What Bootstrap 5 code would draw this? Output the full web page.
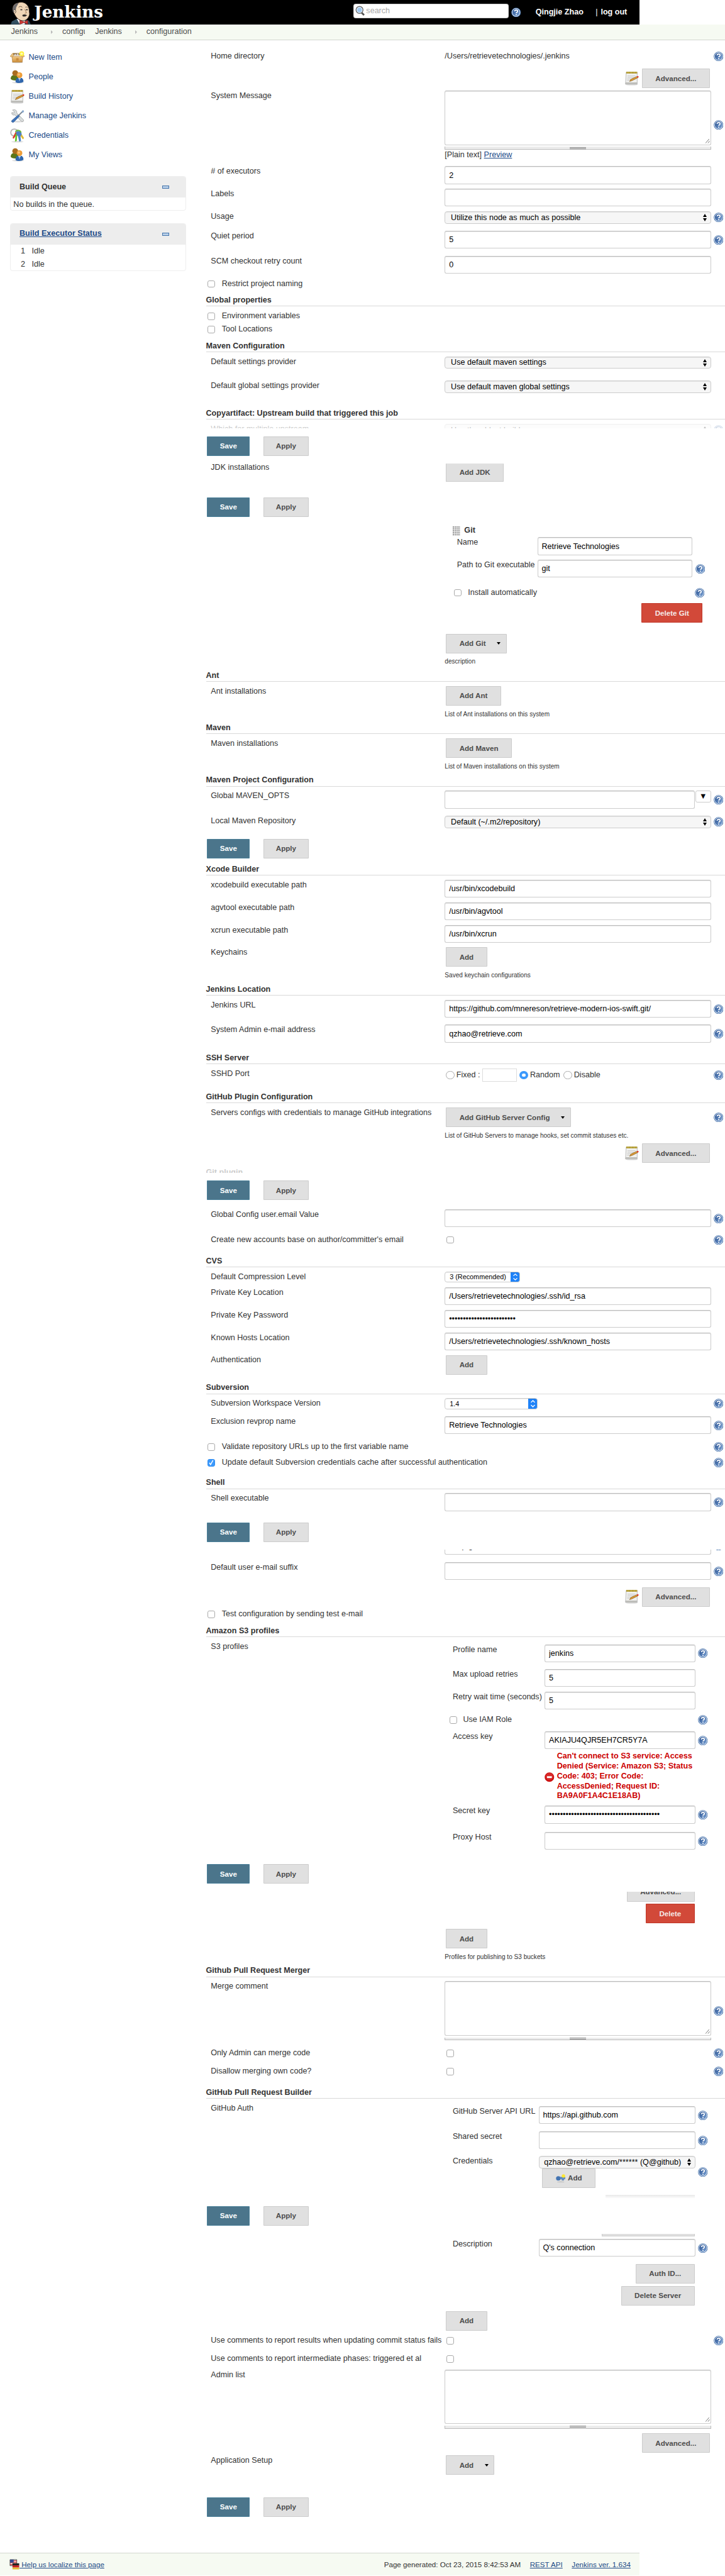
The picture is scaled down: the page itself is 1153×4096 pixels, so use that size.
<!DOCTYPE html>
<html lang="en">
<head>
<meta charset="utf-8">
<title>Configure System [Jenkins]</title>
<link href="https://cdn.jsdelivr.net/npm/bootstrap@5.3.0/dist/css/bootstrap.min.css" rel="stylesheet">
<style>
html,body{margin:0;overflow:hidden}
body{font-family:"Liberation Sans",Arial,sans-serif;background:#fff}
.page{zoom:.969;width:1190px;height:4227px;font-size:13px;line-height:16px;color:#333;overflow:hidden}
.page svg{display:block;flex:none}
.page a{color:#204a87;text-decoration:none}
.page a.ul{text-decoration:underline}
.top-bar{width:1050px;height:40px;background:#000;color:#fff;padding-left:18px}
.brand-name{font:bold 27px/34px "DejaVu Serif",serif;margin-left:4px;width:520px;white-space:nowrap}
.search-box{width:255px;height:24px;background:#fff;border-radius:4px;box-shadow:inset 0 0 2px #777;color:#a9a9a9;padding:0 3px;gap:2px;margin-bottom:4px}
.log-out{margin-left:5px}
.crumbs{height:26px;background:#f6faf2;border-bottom:1px solid #d3d7cf;color:#4d4d4d;padding-left:18px}
.crumbs .tri{width:0;height:0;border:4px solid transparent;border-left-color:#bababa;border-right:0;margin-left:22px;margin-right:15px}
.c-short{width:37px}.c-two{margin-left:17px}
.side{width:338px;padding:13px 0 0 17px}
.task{height:32px;gap:6px}
.pane{width:288px;border:1px solid #eee;border-radius:4px;overflow:hidden}
.pane-head{height:34px;background:#ededed;font-weight:bold;padding:0 26px 0 14px}
.minus{width:12px;height:5px;background:#b9cfe8;border:1px solid #4474ac}
.main-col{width:852px;padding-top:18px}
.cfg{display:flex;align-items:flex-start;padding-left:8px}
.lab{width:384px;flex:none;white-space:nowrap;padding-top:1px}
.ctl{width:437px;flex:none}
.hlp{margin-left:4px}
.t7{margin-top:7px}.t2{margin-top:2px}.t1{margin-top:1px}.t8{margin-top:8px}.t3{margin-top:3px}
.mt48{margin-top:48px}.mt41{margin-top:41px}.mt18{margin-top:18px}.mb7{margin-bottom:7px}
.head{height:19px;padding-top:1px;border-bottom:1px solid #d9d9d9;margin-bottom:7px;font-weight:bold;color:#333;white-space:nowrap}
.page .form-control{height:29px;padding:0 6px;border:1px solid #ccc;border-top-color:#bbb;border-radius:3px;font-size:13px;line-height:27px;color:#000;background:#fff;box-shadow:inset 0 1px 1px rgba(0,0,0,.1)}
.page textarea.form-control{height:89px;resize:none}
.page .form-select{height:20px;min-height:0;padding:0 20px 0 9px;border:1px solid #ccc;border-radius:4px;font-size:13px;line-height:17px;color:#000;background:#f6f6f6 url("data:image/svg+xml,%3Csvg xmlns='http://www.w3.org/2000/svg' viewBox='0 0 6 12'%3E%3Cpath d='M0 5l3-5 3 5zM0 7l3 5 3-5z'/%3E%3C/svg%3E") no-repeat right 6px center/6px 12px;box-shadow:inset 0 1px 1px rgba(0,0,0,.08)}
.page .form-select.mac{height:18px;padding:0 20px 0 7px;font-size:11.2px;line-height:15px;background:#fff url("data:image/svg+xml,%3Csvg xmlns='http://www.w3.org/2000/svg' viewBox='0 0 15 18'%3E%3Cpath fill='%231e82f8' d='M0 0h15v18H0z'/%3E%3Cpath d='M4.5 7l3-3 3 3M4.5 11l3 3 3-3' fill='none' stroke='%23fff' stroke-width='1.3'/%3E%3C/svg%3E") no-repeat right -1px center/15px 18px}
.page .w123{width:123px}.page .w152{width:152px}
.page .cred{padding:0 14px 0 8px}
.grip{height:5px;margin-top:3px;border:1px solid #bbb;border-top:0;background:#ececec;display:flex;justify-content:center;align-items:center}
.grip i{width:27px;height:3px;border-top:1px solid #888;border-bottom:1px solid #888}
.area{position:relative}
.area svg{position:absolute;right:2px;top:78px}
.page .btn{height:32px;padding:0 21px;border:1px solid #ccc;border-radius:1px;background:#e0e0e0;color:#4d4d4d;font-size:12px;font-weight:bold;line-height:29px;white-space:nowrap;display:inline-flex;align-items:center}
.page .btn.save{background:#4b758b;border-color:#4a8099;color:#fff}
.page .btn.del{background:#d24939;border-color:#c03728;color:#f5e9e8}
.page .btn.menu{padding-right:9px}
.page .cuttop{height:30px;border-top:0}
.page .keyb{margin-left:6px;gap:4px}
.menu::after{content:"";border:4px solid transparent;border-top:5px solid #000;border-bottom:0;margin-left:18px}
.saves{display:flex;gap:22px;padding-left:2px;align-items:flex-start}
.saves .save{width:70px;padding:0;justify-content:center}
.saves .apply{width:75px;padding:0;justify-content:center}
.ck{width:12px;height:12px;border:1px solid #aaa;border-radius:3px;background:#fff;flex:none;margin:3px 0 0 3px}
.ck.on{background:#3b99fc;border-color:#2f8cf0}
.ckrow{display:flex;align-items:flex-start;gap:11px}
.ckrow span{margin-top:1px;white-space:nowrap}
.ckrow .hlp{margin:1px 3px 0 auto}
.ckg{padding-left:404px}.ckg .hlp{margin-right:34px}
.cks{padding-left:397px;gap:10px}.cks .hlp{margin-right:28px}
.radio{width:14px;height:14px;border:1px solid #aaa;border-radius:50%;flex:none;background:#fff}
.radio.on{border:5px solid #3b99fc;background:#fff}
.port{width:56px;height:21px;border:1px solid #ddd;margin:0 5px 0 4px}
.rt1,.rt2,.rt3{margin-left:3px;white-space:nowrap}.rt2{margin-right:6px}
.desc{padding-left:392px;font-size:10.4px;white-space:nowrap}
.acts{display:flex;justify-content:flex-end;gap:5px;padding-right:25px}
.a37{padding-right:37px}.a50{padding-right:50px}
.indent{padding-left:394px}
.ps2{padding-left:2px}
.lift{margin-top:-2px}
.nest{display:flex;align-items:flex-start;padding-left:405px}
.nest .nl{flex:none;white-space:nowrap;padding-top:1px}
.n-git{padding-left:412px}.n-git .nl{width:132px}.n-git .form-control{width:254px}
.n-s3 .nl{width:151px}.n-s3 .form-control{width:247px}
.n-gh .nl{width:141px}.n-gh .form-control,.n-gh .form-select{width:257px}
.nest .hlp{margin-left:5px}
.gitname{padding-left:405px}.gitname b{margin-left:7px}
.dots{width:12px;height:15px;margin-top:1px;background:radial-gradient(circle at 1px 1px,#888 0 .9px,transparent 1.1px) 0 0/3px 3px}
.s3err{width:240px;color:#c00;font-weight:bold;line-height:16.3px}
.erri{margin:34px 4px 0 0}
.cut{overflow:hidden}
.fade-a{opacity:.25}
.drop{width:26px;height:19px;flex:none;margin-left:1px;border:1px solid #ccc;border-radius:3px;background:#fff;font-size:13px;line-height:14px;padding:0;color:#000}
.ghost{width:146px;height:6px;background:linear-gradient(#e8e8e8,#fff)}
.slice{width:152px;height:5px;background:#e0e0e0;border:1px solid #ccc;border-top:0}
.foot{width:1050px;height:37px;border-top:1px solid #d3d7cf;background:#f6faf2;padding:0 15px;font-size:12px}
.f-gap{margin-left:15px}
.g3{height:3px}.g5{height:5px}.g7{height:7px}.g8{height:8px}.g9{height:9px}.h16{height:16px}.h18{height:18px}.h19{height:19px}.h20{height:20px}.h21{height:21px}.h22{height:22px}.h25x{height:25px}.h26{height:26px}.h27{height:27px}.h28{height:28px}.h29{height:29px}.h30{height:30px}.h32{height:32px}.h33{height:33px}.h35{height:35px}.h36{height:36px}.h37{height:37px}.h38{height:38px}.h39{height:39px}.h40{height:40px}.h41{height:41px}.h43{height:43px}.h44{height:44px}.h45{height:45px}.h46{height:46px}.h47{height:47px}.h48{height:48px}.h50x{height:50px}.h53{height:53px}.h64{height:64px}.h69{height:69px}.h89{height:89px}.h91{height:91px}.h105{height:105px}.h109{height:109px}.h124{height:124px}
</style>
<script src="https://cdn.jsdelivr.net/npm/bootstrap@5.3.0/dist/js/bootstrap.bundle.min.js"></script>
</head>
<body>
<svg width="0" height="0" class="position-absolute">
<defs>
<linearGradient id="blue" x1="0" y1="0" x2="1" y2="1"><stop offset="0" stop-color="#28508f"/><stop offset="1" stop-color="#7ba3d6"/></linearGradient>
<linearGradient id="box" x1="0" y1="0" x2="0" y2="1"><stop offset="0" stop-color="#f0c883"/><stop offset="1" stop-color="#cf9240"/></linearGradient>
</defs>
<symbol id="q" viewBox="0 0 16 16"><circle cx="8" cy="8" r="7.8" fill="#3465a4"/><circle cx="8" cy="8" r="6.9" fill="#fff"/><circle cx="8" cy="8" r="6.1" fill="url(#blue)"/><path d="M5.6 6.3C5.6 4.7 6.7 4 8.1 4c1.4 0 2.5.8 2.5 2.1 0 1.6-2.3 1.7-2.3 3.2" fill="none" stroke="#fff" stroke-width="1.7"/><circle cx="8.2" cy="11.6" r="1" fill="#fff"/></symbol>
<symbol id="note" viewBox="0 0 24 24"><ellipse cx="12" cy="22.3" rx="10" ry="1.2" fill="#ddd"/><path d="M3 2h18v19.500H1.800z" fill="#f1f1ef" stroke="#aaa" stroke-width=".8"/><path d="M2 18.500h19v3H1.600z" fill="#bdbdb9"/><path d="M3 1h18v3H3z" fill="#a28d29"/><path d="M4 2.500h16" stroke="#d9c564" stroke-width="3" stroke-dasharray="1 1.500"/><path d="M5 8h13M5 10.500h11M4.500 13h6M4.500 15.500h4" stroke="#c5c5c5"/><path d="M8.500 17l2-3.500L20 9l2 2-10 5z" fill="#dc9b36" stroke="#704c17" stroke-width=".6"/><path d="M20 9l2.500-1 1 1.500L22 11z" fill="#e22c24"/></symbol>
<symbol id="crate" viewBox="0 0 24 24"><ellipse cx="12" cy="20" rx="9" ry="1" fill="#ccc"/><path d="M3 10h18l-1 9.500H4z" fill="url(#box)" stroke="#a87531" stroke-width=".6"/><path d="M4 5l-4 5 4 1 2-3h12l2 3 4-1-4-5z" fill="#eac17c" stroke="#aa7732" stroke-width=".6"/><path d="M5 5h14l-1 3H6z" fill="#7e5d2d"/><path d="M7 6h3v2H7zM11 5.500h3V8h-3z" fill="#ddd"/><path d="M10 13h4v4h-4z" fill="#c98b3c"/><circle cx="19" cy="5.500" r="4" fill="#fff13b"/><circle cx="19" cy="5.500" r="2" fill="#fffab0"/></symbol>
<symbol id="people" viewBox="0 0 24 24"><ellipse cx="13" cy="21" rx="10" ry="1.300" fill="#ddd"/><path d="M1 15c0-5 3-6.500 6.500-6.500S14 11 14 16c-3 2-9 2.500-13-1z" fill="#5b761a"/><circle cx="8.500" cy="5.500" r="4.800" fill="#a96d20"/><path d="M9 20c0-5 2-7 6.500-7s6.500 2 6.500 6.500c-3 2.500-10 2.800-13 .5z" fill="#2f66ad"/><path d="M13.500 13l2 6 2-6z" fill="#fff"/><path d="M15.500 14v6" stroke="#346eb6"/><circle cx="15.500" cy="8.800" r="4.700" fill="#ee9d38"/><circle cx="14.500" cy="7.800" r="2" fill="#f9c477"/></symbol>
<symbol id="tools" viewBox="0 0 24 24"><ellipse cx="13" cy="21" rx="9" ry="1.500" fill="#ddd"/><path d="M4 2l3 3-1 2-3-1C2 10 6 11 8 10l11 11c2 1 4-1 3-3L11 7c1-3-2-7-7-5z" fill="#d9dddd" stroke="#949494" stroke-width=".7"/><path d="M22 3l-8 8" stroke="#7a8592" stroke-width="2"/><path d="M21 2l2 2-2 3-2-2z" fill="#88a8ce"/><path d="M13.500 10l2 2L6 22c-2 1-5-1-3-3z" fill="#3d72b8" stroke="#284f88" stroke-width=".6"/></symbol>
<symbol id="keys" viewBox="0 0 24 24"><ellipse cx="12" cy="22" rx="10" ry="1.200" fill="#ddd"/><circle cx="7" cy="7" r="5.800" fill="none" stroke="#b9b9b9" stroke-width="2"/><path d="M18 8l5 8-2 2-6-8z" fill="#dfba35"/><path d="M12 8l-6 9-2-1 5-10z" fill="#db382c"/><path d="M12 9l-1 12-3 1 1-13z" fill="#67c62e"/><path d="M10 6c3-3 9-2 9 3 0 2-1 3-2 4l1 8-3 1-2-9c-2-1-3-3-3-7z" fill="#4d82c4"/><path d="M9 6c2-4 8-3 9 1" stroke="#68b53a" stroke-width="2" fill="none"/></symbol>
<symbol id="key" viewBox="0 0 16 14"><ellipse cx="8" cy="13" rx="6" ry=".8" fill="#bbb"/><circle cx="4" cy="7" r="3.700" fill="#4475b3"/><path d="M6 5h9v3h-2v2h-3V8H6z" fill="#5f8fc8" stroke="#345f99" stroke-width=".5"/><circle cx="12.500" cy="3" r="2.800" fill="#ffe731"/></symbol>
<symbol id="rs" viewBox="0 0 8 8"><path d="M1 8l6-7M5 8l3-4" stroke="#777" stroke-width="1"/></symbol>
</svg>

<div class="page">
<header class="top-bar d-flex align-items-center">
  <svg width="34" height="40" viewBox="0 0 34 40"><path d="M0 40l2-5 8-4h12l8 3 3 6z" fill="#335061"/><path d="M10 31l5 9h8l1-9z" fill="#fff"/><path d="M5 21C1 14 4 6 11 5c9-4 17 1 19 9l1 9c-1 6-5 11-11 11-7 0-11-5-15-13z" fill="#f0d6b7" stroke="#30231b"/><path d="M4 20C2 12 5 6 13 5L9 12l-1 7z" fill="#6d6b6d"/><path d="M5 16c3-1 5 3 2 6" fill="#f0d6b7" stroke="#333" stroke-width=".8"/><path d="M13 12c2-2 4-2 6 0M24 12c1-1 3-1 4 1" stroke="#6d5b48" fill="none"/><path d="M16 16h3M25 16h3" stroke="#222" stroke-width="1.300"/><path d="M23 15l3 6-3 1" fill="none" stroke="#a47d58"/><path d="M19 25c3-2 5-1 8 0l-3 2h-4z" fill="#302b28"/><path d="M15 33l7 3 6-3v7l-6-3-7 3z" fill="#d33833" stroke="#681b19" stroke-width=".7"/></svg>
  <div class="brand-name">Jenkins</div>
  <div class="search-box d-flex align-items-center ms-1"><svg width="16" height="17" viewBox="0 0 16 17"><path d="M10 11l4.500 4.500" stroke="#555" stroke-width="3"/><circle cx="7" cy="7" r="5.700" fill="#bddaf5" stroke="#696969" stroke-width="1.500"/><circle cx="7" cy="7" r="4.200" fill="#9cc6ef" stroke="#fff" stroke-width=".8"/></svg><span>search</span></div>
  <svg class="mx-1" width="16" height="16"><use href="#q"/></svg>
  <b class="ms-3 ps-1 text-nowrap">Qingjie Zhao</b><span class="ms-3 ps-1">|</span><b class="log-out text-nowrap">log out</b>
</header>
<nav class="crumbs d-flex align-items-center">
  <span>Jenkins</span><i class="tri"></i><span class="cut text-nowrap c-short">configu</span>
  <span class="c-two">Jenkins</span><i class="tri"></i><span>configuration</span>
</nav>

<div class="d-flex">
<aside class="side">
  <a class="task d-flex align-items-center" href="#"><svg width="24" height="24"><use href="#crate"/></svg>New Item</a>
  <a class="task d-flex align-items-center" href="#"><svg width="24" height="24"><use href="#people"/></svg>People</a>
  <a class="task d-flex align-items-center" href="#"><svg width="24" height="24"><use href="#note"/></svg>Build History</a>
  <a class="task d-flex align-items-center" href="#"><svg width="24" height="24"><use href="#tools"/></svg>Manage Jenkins</a>
  <a class="task d-flex align-items-center" href="#"><svg width="24" height="24"><use href="#keys"/></svg>Credentials</a>
  <a class="task d-flex align-items-center" href="#"><svg width="24" height="24"><use href="#people"/></svg>My Views</a>
  <div class="h18"></div>
  <div class="pane"><div class="pane-head d-flex align-items-center justify-content-between">Build Queue<i class="minus"></i></div><div class="h21 px-1 pt-1">No builds in the queue.</div></div>
  <div class="h20"></div>
  <div class="pane"><div class="pane-head d-flex align-items-center justify-content-between"><a class="ul" href="#">Build Executor Status</a><i class="minus"></i></div><div class="h43 px-3 pt-1"><div class="h21">1 &nbsp; Idle</div><div>2 &nbsp; Idle</div></div></div>
</aside>

<main class="main-col">
<div class="cfg h29"><div class="lab">Home directory</div><div class="ctl t1">/Users/retrievetechnologies/.jenkins</div><svg class="hlp t1" width="16" height="16"><use href="#q"/></svg></div>
<div class="acts h36"><svg class="mt-1" width="24" height="24"><use href="#note"/></svg><button class="btn">Advanced...</button></div>
<div class="cfg h124"><div class="lab">System Message</div><div class="ctl"><div class="area"><textarea class="form-control"></textarea><svg width="8" height="8"><use href="#rs"/></svg></div><div class="grip"><i></i></div><div class="text-nowrap t1">[Plain text] <a class="ul" href="#">Preview</a></div></div><svg class="hlp mt48" width="16" height="16"><use href="#q"/></svg></div>
<div class="cfg h37"><div class="lab"># of executors</div><div class="ctl"><input class="form-control" value="2"></div></div>
<div class="cfg h37"><div class="lab">Labels</div><div class="ctl"><input class="form-control"></div></div>
<div class="cfg h32"><div class="lab">Usage</div><div class="ctl"><select class="form-select"><option>Utilize this node as much as possible</option></select></div><svg class="hlp t2" width="16" height="16"><use href="#q"/></svg></div>
<div class="cfg h41"><div class="lab">Quiet period</div><div class="ctl"><input class="form-control" value="5"></div><svg class="hlp t7" width="16" height="16"><use href="#q"/></svg></div>
<div class="cfg h37"><div class="lab">SCM checkout retry count</div><div class="ctl"><input class="form-control" value="0"></div></div>
<div class="ckrow h27"><i class="ck"></i><span>Restrict project naming</span></div>
<div class="head">Global properties</div>
<div class="ckrow h22"><i class="ck"></i><span>Environment variables</span></div>
<div class="ckrow h27"><i class="ck"></i><span>Tool Locations</span></div>
<div class="head">Maven Configuration</div>
<div class="cfg h40"><div class="lab">Default settings provider</div><div class="ctl"><select class="form-select"><option>Use default maven settings</option></select></div></div>
<div class="cfg h45"><div class="lab">Default global settings provider</div><div class="ctl"><select class="form-select"><option>Use default maven global settings</option></select></div></div>
<div class="head">Copyartifact: Upstream build that triggered this job</div>
<div class="h20"><div class="cfg g7 cut fade-a"><div class="lab">Which for multiple upstream</div><div class="ctl"><select class="form-select"><option>Use the oldest build</option></select></div><svg class="hlp t2" width="16" height="16"><use href="#q"/></svg></div></div>
<div class="saves h45"><button class="btn save">Save</button><button class="btn apply">Apply</button></div>
<div class="cfg h39"><div class="lab lift">JDK installations</div><div class="ctl ps2"><button class="btn cuttop">Add JDK</button></div></div>
<div class="h16"><div class="desc cut g3 fade-a">List of JDK installations on this system</div></div>
<div class="saves h47"><button class="btn save">Save</button><button class="btn apply">Apply</button></div>

<div class="d-flex h19 gitname"><i class="dots"></i><b>Git</b></div>
<div class="nest n-git h37"><div class="nl">Name</div><input class="form-control" value="Retrieve Technologies"></div>
<div class="nest n-git h45"><div class="nl">Path to Git executable</div><input class="form-control" value="git"><svg class="hlp t7" width="16" height="16"><use href="#q"/></svg></div>
<div class="ckrow h26 ckg"><i class="ck"></i><span>Install automatically</span><svg class="hlp" width="16" height="16"><use href="#q"/></svg></div>
<div class="acts h50x a37"><button class="btn del">Delete Git</button></div>
<div class="indent h38"><button class="btn menu">Add Git</button></div>
<div class="desc h22">description</div>
<div class="head">Ant</div>
<div class="cfg h38"><div class="lab">Ant installations</div><div class="ctl ps2"><button class="btn">Add Ant</button></div></div>
<div class="desc h22">List of Ant installations on this system</div>
<div class="head">Maven</div>
<div class="cfg h38"><div class="lab">Maven installations</div><div class="ctl ps2"><button class="btn">Add Maven</button></div></div>
<div class="desc h22">List of Maven installations on this system</div>
<div class="head">Maven Project Configuration</div>
<div class="cfg h41"><div class="lab">Global MAVEN_OPTS</div><div class="ctl d-flex"><input class="form-control"><button class="drop">▼</button></div><svg class="hlp t7" width="16" height="16"><use href="#q"/></svg></div>
<div class="cfg h38"><div class="lab">Local Maven Repository</div><div class="ctl"><select class="form-select"><option>Default (~/.m2/repository)</option></select></div><svg class="hlp t2" width="16" height="16"><use href="#q"/></svg></div>
<div class="saves h41"><button class="btn save">Save</button><button class="btn apply">Apply</button></div>
<div class="head">Xcode Builder</div>
<div class="cfg h37"><div class="lab">xcodebuild executable path</div><div class="ctl"><input class="form-control" value="/usr/bin/xcodebuild"></div></div>
<div class="cfg h37"><div class="lab">agvtool executable path</div><div class="ctl"><input class="form-control" value="/usr/bin/agvtool"></div></div>
<div class="cfg h37"><div class="lab">xcrun executable path</div><div class="ctl"><input class="form-control" value="/usr/bin/xcrun"></div></div>
<div class="cfg h38"><div class="lab">Keychains</div><div class="ctl ps2"><button class="btn">Add</button></div></div>
<div class="desc h22">Saved keychain configurations</div>
<div class="head">Jenkins Location</div>
<div class="cfg h41"><div class="lab">Jenkins URL</div><div class="ctl"><input class="form-control" value="https://github.com/mnereson/retrieve-modern-ios-swift.git/"></div><svg class="hlp t7" width="16" height="16"><use href="#q"/></svg></div>
<div class="cfg h46"><div class="lab">System Admin e-mail address</div><div class="ctl"><input class="form-control" value="qzhao@retrieve.com"></div><svg class="hlp t7" width="16" height="16"><use href="#q"/></svg></div>
<div class="head">SSH Server</div>
<div class="cfg h38"><div class="lab">SSHD Port</div><div class="ctl d-flex align-items-center ps2"><i class="radio"></i><span class="rt1">Fixed :</span><i class="port"></i><i class="radio on"></i><span class="rt2">Random</span><i class="radio"></i><span class="rt3">Disable</span></div><svg class="hlp t3" width="16" height="16"><use href="#q"/></svg></div>
<div class="head">GitHub Plugin Configuration</div>
<div class="cfg h38"><div class="lab">Servers configs with credentials to manage GitHub integrations</div><div class="ctl ps2"><button class="btn menu">Add GitHub Server Config</button></div><svg class="hlp t8" width="16" height="16"><use href="#q"/></svg></div>
<div class="desc h21">List of GitHub Servers to manage hooks, set commit statuses etc.</div>
<div class="acts h36"><svg class="mt-1" width="24" height="24"><use href="#note"/></svg><button class="btn">Advanced...</button></div>
<div class="h25x pt-1"><div class="cut g8 fade-a fw-bold">Git plugin</div></div>
<div class="saves h47"><button class="btn save">Save</button><button class="btn apply">Apply</button></div>
<div class="cfg h41"><div class="lab">Global Config user.email Value</div><div class="ctl"><input class="form-control"></div><svg class="hlp t7" width="16" height="16"><use href="#q"/></svg></div>
<div class="cfg h35"><div class="lab">Create new accounts base on author/committer's email</div><div class="ctl"><i class="ck d-block"></i></div><svg class="hlp t1" width="16" height="16"><use href="#q"/></svg></div>
<div class="head">CVS</div>
<div class="cfg h26"><div class="lab">Default Compression Level</div><div class="ctl"><select class="form-select mac w123"><option>3 (Recommended)</option></select></div></div>
<div class="cfg h37"><div class="lab">Private Key Location</div><div class="ctl"><input class="form-control" value="/Users/retrievetechnologies/.ssh/id_rsa"></div></div>
<div class="cfg h37"><div class="lab">Private Key Password</div><div class="ctl"><input class="form-control" value="••••••••••••••••••••••••"></div></div>
<div class="cfg h37"><div class="lab">Known Hosts Location</div><div class="ctl"><input class="form-control" value="/Users/retrievetechnologies/.ssh/known_hosts"></div></div>
<div class="cfg h45"><div class="lab">Authentication</div><div class="ctl ps2"><button class="btn">Add</button></div></div>
<div class="head">Subversion</div>
<div class="cfg h30"><div class="lab">Subversion Workspace Version</div><div class="ctl"><select class="form-select mac w152"><option>1.4</option></select></div><svg class="hlp t1" width="16" height="16"><use href="#q"/></svg></div>
<div class="cfg h41"><div class="lab">Exclusion revprop name</div><div class="ctl"><input class="form-control" value="Retrieve Technologies"></div><svg class="hlp t7" width="16" height="16"><use href="#q"/></svg></div>
<div class="ckrow h26"><i class="ck"></i><span>Validate repository URLs up to the first variable name</span><svg class="hlp" width="16" height="16"><use href="#q"/></svg></div>
<div class="ckrow h33"><i class="ck on"><svg width="10" height="10" viewBox="0 0 10 10"><path d="M2 5l2 3 4-7" fill="none" stroke="#fff" stroke-width="1.500"/></svg></i><span>Update default Subversion credentials cache after successful authentication</span><svg class="hlp" width="16" height="16"><use href="#q"/></svg></div>
<div class="head">Shell</div>
<div class="cfg h48"><div class="lab">Shell executable</div><div class="ctl"><input class="form-control"></div><svg class="hlp t7" width="16" height="16"><use href="#q"/></svg></div>
<div class="saves h44"><button class="btn save">Save</button><button class="btn apply">Apply</button></div>
<div class="h21"><div class="cfg cut g9 align-items-end"><div class="lab"></div><div class="ctl"><input class="form-control" value="smtp.gmail.com"></div><svg class="hlp mb7" width="16" height="16"><use href="#q"/></svg></div></div>
<div class="cfg h41"><div class="lab">Default user e-mail suffix</div><div class="ctl"><input class="form-control"></div><svg class="hlp t7" width="16" height="16"><use href="#q"/></svg></div>
<div class="acts h36"><svg class="mt-1" width="24" height="24"><use href="#note"/></svg><button class="btn">Advanced...</button></div>
<div class="ckrow h27"><i class="ck"></i><span>Test configuration by sending test e-mail</span></div>
<div class="head">Amazon S3 profiles</div>
<div class="g5 cfg"><div class="lab">S3 profiles</div></div>
<div class="nest n-s3 h41"><div class="nl">Profile name</div><input class="form-control" value="jenkins"><svg class="hlp t7" width="16" height="16"><use href="#q"/></svg></div>
<div class="nest n-s3 h37"><div class="nl">Max upload retries</div><input class="form-control" value="5"></div>
<div class="nest n-s3 h37"><div class="nl">Retry wait time (seconds)</div><input class="form-control" value="5"></div>
<div class="ckrow h28 cks"><i class="ck"></i><span>Use IAM Role</span><svg class="hlp" width="16" height="16"><use href="#q"/></svg></div>
<div class="nest n-s3 h33"><div class="nl">Access key</div><input class="form-control" value="AKIAJU4QJR5EH7CR5Y7A"><svg class="hlp t7" width="16" height="16"><use href="#q"/></svg></div>
<div class="nest n-s3 h89"><div class="nl">&nbsp;</div><svg class="erri" width="16" height="16" viewBox="0 0 16 16"><circle cx="8" cy="8" r="7.800" fill="#c11"/><circle cx="8" cy="7" r="6" fill="#e33b3b" opacity=".6"/><path d="M4 6.500h8v3H4z" fill="#fff"/></svg><div class="s3err">Can't connect to S3 service: Access<br>Denied (Service: Amazon S3; Status<br>Code: 403; Error Code:<br>AccessDenied; Request ID:<br>BA9A0F1A4C1E18AB)</div></div>
<div class="nest n-s3 h43"><div class="nl">Secret key</div><input class="form-control" value="••••••••••••••••••••••••••••••••••••••••"><svg class="hlp t7" width="16" height="16"><use href="#q"/></svg></div>
<div class="nest n-s3 h53"><div class="nl">Proxy Host</div><input class="form-control"><svg class="hlp t7" width="16" height="16"><use href="#q"/></svg></div>
<div class="saves h45"><button class="btn save">Save</button><button class="btn apply">Apply</button></div>
<div class="h20"><div class="acts cut h16 a50 align-items-end"><button class="btn">Advanced...</button></div></div>
<div class="acts h41 a50"><button class="btn del">Delete</button></div>
<div class="indent h38"><button class="btn">Add</button></div>
<div class="desc h22">Profiles for publishing to S3 buckets</div>
<div class="head">Github Pull Request Merger</div>
<div class="cfg h109"><div class="lab">Merge comment</div><div class="ctl"><div class="area"><textarea class="form-control"></textarea><svg width="8" height="8"><use href="#rs"/></svg></div><div class="grip"><i></i></div></div><svg class="hlp mt41" width="16" height="16"><use href="#q"/></svg></div>
<div class="cfg h30"><div class="lab">Only Admin can merge code</div><div class="ctl"><i class="ck d-block"></i></div><svg class="hlp t1" width="16" height="16"><use href="#q"/></svg></div>
<div class="cfg h35"><div class="lab">Disallow merging own code?</div><div class="ctl"><i class="ck d-block"></i></div><svg class="hlp t1" width="16" height="16"><use href="#q"/></svg></div>
<div class="head">GitHub Pull Request Builder</div>
<div class="g5 cfg"><div class="lab">GitHub Auth</div></div>
<div class="nest n-gh h41"><div class="nl">GitHub Server API URL</div><input class="form-control" value="https://api.github.com"><svg class="hlp t7" width="16" height="16"><use href="#q"/></svg></div>
<div class="nest n-gh h41"><div class="nl">Shared secret</div><input class="form-control"><svg class="hlp t7" width="16" height="16"><use href="#q"/></svg></div>
<div class="nest n-gh h64"><div class="nl">Credentials</div><div><select class="form-select cred"><option>qzhao@retrieve.com/****** (Q@github)</option></select><button class="btn keyb"><svg width="16" height="14"><use href="#key"/></svg>Add</button></div><svg class="hlp mt18" width="16" height="16"><use href="#q"/></svg></div>
<div class="h18 acts a50"><i class="ghost"></i></div>
<div class="saves h45"><button class="btn save">Save</button><button class="btn apply">Apply</button></div>
<div class="g9 acts a50"><i class="slice"></i></div>
<div class="nest n-gh h41"><div class="nl">Description</div><input class="form-control" value="Q's connection"><svg class="hlp t7" width="16" height="16"><use href="#q"/></svg></div>
<div class="acts h36 a50"><button class="btn">Auth ID...</button></div>
<div class="acts h41 a50"><button class="btn">Delete Server</button></div>
<div class="indent h40"><button class="btn">Add</button></div>
<div class="cfg h30"><div class="lab">Use comments to report results when updating commit status fails</div><div class="ctl"><i class="ck d-block"></i></div><svg class="hlp t1" width="16" height="16"><use href="#q"/></svg></div>
<div class="cfg h26"><div class="lab">Use comments to report intermediate phases: triggered et al</div><div class="ctl"><i class="ck d-block"></i></div></div>
<div class="cfg h105"><div class="lab">Admin list</div><div class="ctl"><div class="area"><textarea class="form-control"></textarea><svg width="8" height="8"><use href="#rs"/></svg></div><div class="grip"><i></i></div></div></div>
<div class="acts h36"><button class="btn">Advanced...</button></div>
<div class="cfg h69"><div class="lab">Application Setup</div><div class="ctl ps2"><button class="btn menu">Add</button></div></div>
<div class="saves h91"><button class="btn save">Save</button><button class="btn apply">Apply</button></div>
</main>
</div>
<footer class="foot d-flex align-items-center">
  <svg width="17" height="18" viewBox="0 0 17 18"><path d="M1 1h11v10H1z" fill="#fff" stroke="#444"/><path d="M1 3h11M1 6h11M1 9h11" stroke="#c33" stroke-width="1.500"/><path d="M1 1h6v5H1z" fill="#354d91"/><path d="M5 7h11v3.500H5z" fill="#222"/><path d="M5 10.500h11V14H5z" fill="#c52020"/><path d="M5 14h11v3H5z" fill="#e3bd37"/></svg>
  <a class="ul me-auto" href="#">&nbsp;Help us localize this page</a>
  <span>Page generated: Oct 23, 2015 8:42:53 AM</span><a class="ul f-gap" href="#">REST API</a><a class="ul f-gap" href="#">Jenkins ver. 1.634</a>
</footer>
</div>
</body>
</html>
